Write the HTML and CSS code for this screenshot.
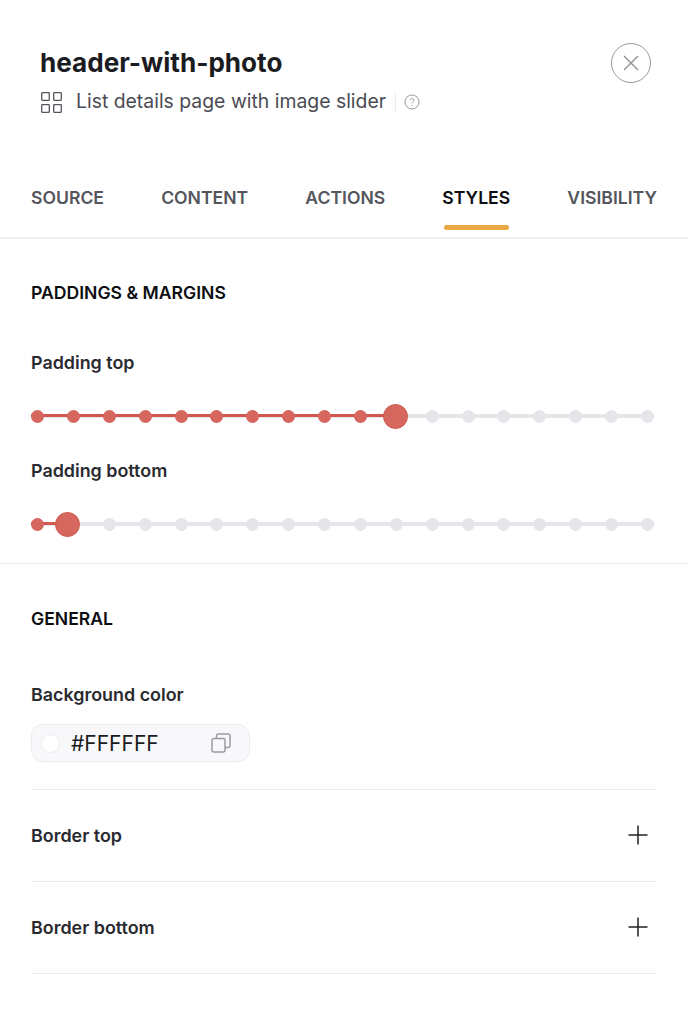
FILE: index.html
```html
<!DOCTYPE html>
<html lang="en">
<head>
<meta charset="utf-8">
<title>header-with-photo</title>
<link rel="stylesheet" href="styles.css">
</head>
<body>
<header class="head">
  <div class="head-text">
    <h1 class="title">header-with-photo</h1>
    <div class="sub">
      <svg class="grid-icon" width="21" height="21" viewBox="0 0 21 21" fill="none" stroke="#55565e" stroke-width="1.3"><rect x="0.7" y="0.7" width="7.6" height="7.6" rx="0.5"/><rect x="12.7" y="0.7" width="7.6" height="7.6" rx="0.5"/><rect x="0.7" y="12.7" width="7.6" height="7.6" rx="0.5"/><rect x="12.7" y="12.7" width="7.6" height="7.6" rx="0.5"/></svg>
      <span class="sub-text">List details page with image slider</span>
      <span class="sub-sep"></span>
      <svg width="16" height="16" viewBox="0 0 16 16" fill="none" stroke="#9a9ba1" stroke-width="1"><circle cx="8" cy="8" r="7"/><path d="M6.1 6.4a1.9 1.9 0 1 1 2.9 1.6c-.6.4-1 .8-1 1.5"/><path d="M8 11v1"/></svg>
    </div>
  </div>
  <button class="close" aria-label="Close">
    <svg width="18" height="18" viewBox="0 0 18 18" stroke="#8f9096" stroke-width="1.4" fill="none"><path d="M2 2l14 14M16 2L2 16"/></svg>
  </button>
</header>

<nav class="tabs">
  <span class="tab">SOURCE</span>
  <span class="tab">CONTENT</span>
  <span class="tab">ACTIONS</span>
  <span class="tab active">STYLES</span>
  <span class="tab">VISIBILITY</span>
</nav>

<section class="sec-paddings">
  <h2 class="sec-title">PADDINGS &amp; MARGINS</h2>
  <div class="label first-label">Padding top</div>
  <div class="slider">
    <i class="dot on"></i><i class="dot on"></i><i class="dot on"></i><i class="dot on"></i><i class="dot on"></i><i class="dot on"></i><i class="dot on"></i><i class="dot on"></i><i class="dot on"></i><i class="dot on"></i><i class="dot thumb"></i><i class="dot"></i><i class="dot"></i><i class="dot"></i><i class="dot"></i><i class="dot"></i><i class="dot"></i><i class="dot"></i>
    <span class="fill fill-top"></span>
  </div>
  <div class="label second-label">Padding bottom</div>
  <div class="slider">
    <i class="dot on"></i><i class="dot thumb thumb-left"></i><i class="dot"></i><i class="dot"></i><i class="dot"></i><i class="dot"></i><i class="dot"></i><i class="dot"></i><i class="dot"></i><i class="dot"></i><i class="dot"></i><i class="dot"></i><i class="dot"></i><i class="dot"></i><i class="dot"></i><i class="dot"></i><i class="dot"></i><i class="dot"></i>
    <span class="fill fill-bottom"></span>
  </div>
</section>

<section class="sec-general">
  <h2 class="sec-title">GENERAL</h2>
  <div class="label bg-label">Background color</div>
  <div class="color-field">
    <span class="swatch"></span>
    <span class="color-value">#FFFFFF</span>
    <svg class="copy" width="20" height="20" viewBox="0 0 20 20" fill="none" stroke="#9a9ba1" stroke-width="1.5"><rect x="1" y="5.5" width="13" height="13.5" rx="2"/><path d="M5.5 5.5V3a2 2 0 0 1 2-2H17a2 2 0 0 1 2 2v9.5a2 2 0 0 1-2 2h-3"/></svg>
  </div>
  <div class="row row-first"><span class="label">Border top</span><svg class="plus" width="20" height="20" viewBox="0 0 20 20" stroke="#1f2025" stroke-width="1.5"><path d="M10 0.5v19M0.5 10h19"/></svg></div>
  <div class="row"><span class="label">Border bottom</span><svg class="plus" width="20" height="20" viewBox="0 0 20 20" stroke="#1f2025" stroke-width="1.5"><path d="M10 0.5v19M0.5 10h19"/></svg></div>
</section>
</body>
</html>
```

FILE: styles.css
```css
* { box-sizing: border-box; }
html, body { margin: 0; padding: 0; }
body {
  width: 688px;
  height: 1024px;
  overflow: hidden;
  background: #fff;
  font-family: Inter, "Liberation Sans", sans-serif;
  color: #232429;
}
.head {
  display: flex;
  justify-content: space-between;
  align-items: flex-start;
  padding: 43px 37px 0 40px;
  height: 161px;
}
.title {
  margin: 0;
  font-size: 26.1px;
  line-height: 40px;
  font-weight: 700;
  color: #1b1c21;
}
.sub {
  display: flex;
  align-items: center;
  margin-top: 3px;
  height: 32px;
}
.grid-icon { margin: 0 14px 0 1px; }
.sub-text { font-size: 19.4px; color: #4a4b53; line-height: 24px; margin-bottom: 2px; }
.sub-sep { width: 1px; height: 20px; background: #ececef; margin: 0 8px 0 9px; }
.close {
  width: 40px;
  height: 40px;
  padding: 0;
  border: 1.4px solid #98999f;
  border-radius: 50%;
  background: #fff;
  display: flex;
  align-items: center;
  justify-content: center;
}
.tabs {
  display: flex;
  justify-content: space-between;
  height: 78px;
  padding: 0 31px;
  border-bottom: 2px solid #f0f0f2;
}
.tab {
  position: relative;
  font-size: 17.6px;
  line-height: 24px;
  padding-top: 25px;
  height: 76px;
  font-weight: 600;
  color: #54555d;
}
.tab.active { color: #0d0e12; }
.tab.active::after {
  content: "";
  position: absolute;
  left: 2px;
  right: 1px;
  top: 64px;
  height: 5px;
  border-radius: 3px;
  background: #eaa946;
}
.sec-paddings {
  height: 325px;
  padding: 42px 31px 0;
  border-bottom: 1px solid #ececef;
}
.sec-title {
  margin: 0;
  font-size: 17.6px;
  line-height: 24px;
  font-weight: 600;
  color: #0d0e12;
}
.label {
  font-size: 17.9px;
  line-height: 24px;
  font-weight: 600;
  color: #2a2b30;
}
.first-label { margin-top: 46px; }
.second-label { margin-top: 23px; }
.slider {
  position: relative;
  display: flex;
  justify-content: space-between;
  align-items: center;
  width: 623px;
  height: 40px;
  margin-top: 21px;
  background: linear-gradient(#e5e5ea, #e5e5ea) center / 100% 4px no-repeat;
}
.dot {
  position: relative;
  z-index: 1;
  flex: none;
  width: 13px;
  height: 13px;
  border-radius: 50%;
  background: #e5e5ea;
}
.dot.on { background: #d5675e; }
.dot.thumb {
  width: 25px;
  height: 25px;
  margin: 0 -5px 0 -7px;
  background: #d5675e;
  border: 1px solid #d2584e;
}
.dot.thumb-left { margin: 0 0 0 -12px; }
.fill {
  position: absolute;
  left: 0;
  top: 18px;
  height: 3px;
  background: #d2584e;
}
.fill-top { width: 358px; }
.fill-bottom { width: 30px; }
.sec-general { padding: 43px 31px 0; }
.bg-label { margin-top: 52px; }
.color-field {
  display: flex;
  align-items: center;
  width: 219px;
  height: 38px;
  margin-top: 17px;
  padding: 0 18px 0 9px;
  background: #f8f8fb;
  border: 1px solid #ececf0;
  border-radius: 12px;
}
.swatch {
  width: 19px;
  height: 19px;
  border-radius: 50%;
  background: #fff;
  border: 1px solid #ececf0;
}
.color-value { margin-left: 11px; font-size: 21px; font-weight: 400; color: #1b1c21; }
.copy { margin-left: auto; }
.row {
  display: flex;
  align-items: center;
  justify-content: space-between;
  height: 92px;
  padding-right: 9px;
  border-bottom: 1px solid #ececef;
}
.row-first { margin-top: 27px; border-top: 1px solid #ececef; height: 93px; }
.plus { margin-bottom: 2px; }
```
